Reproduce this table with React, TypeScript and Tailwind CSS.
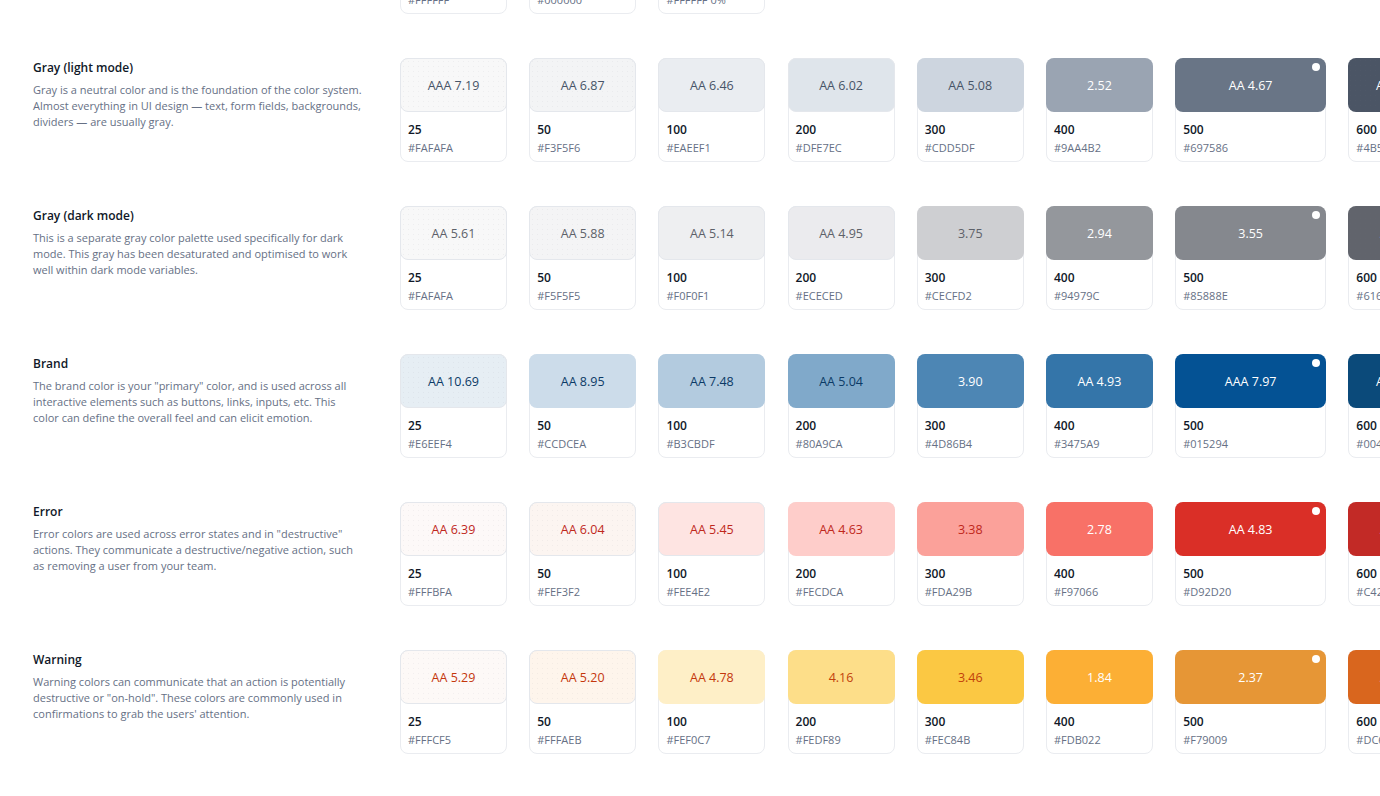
import React from "react";

type Sw = {
  name: string;
  hex: string;
  label: string;
  bg: string;
  text: string;
  dots?: boolean;
  border?: boolean;
};

type Row = {
  title: string;
  desc: string;
  swatches: Sw[];
};

const grayLightText = "text-[#475467]";
const grayDarkText = "text-[#5D6169]";
const brandText = "text-[#0B3A66]";
const errorText = "text-[#C0281C]";
const warnText = "text-[#C4370C]";
const white = "text-white";

const rows: Row[] = [
  {
    title: "Gray (light mode)",
    desc:
      "Gray is a neutral color and is the foundation of the color system. Almost everything in UI design — text, form fields, backgrounds, dividers — are usually gray.",
    swatches: [
      { name: "25", hex: "#FAFAFA", label: "AAA 7.19", bg: "bg-[#F8F8F8]", text: grayLightText, dots: true, border: true },
      { name: "50", hex: "#F3F5F6", label: "AA 6.87", bg: "bg-[#F3F4F5]", text: grayLightText, dots: true, border: true },
      { name: "100", hex: "#EAEEF1", label: "AA 6.46", bg: "bg-[#EAEDF1]", text: grayLightText, border: true },
      { name: "200", hex: "#DFE7EC", label: "AA 6.02", bg: "bg-[#DFE5EB]", text: grayLightText, border: true },
      { name: "300", hex: "#CDD5DF", label: "AA 5.08", bg: "bg-[#CDD5DF]", text: grayLightText },
      { name: "400", hex: "#9AA4B2", label: "2.52", bg: "bg-[#9AA4B2]", text: white },
      { name: "500", hex: "#697586", label: "AA 4.67", bg: "bg-[#697586]", text: white },
      { name: "600", hex: "#4B5565", label: "AAA 7.56", bg: "bg-[#4B5565]", text: white, dots: true },
    ],
  },
  {
    title: "Gray (dark mode)",
    desc:
      "This is a separate gray color palette used specifically for dark mode. This gray has been desaturated and optimised to work well within dark mode variables.",
    swatches: [
      { name: "25", hex: "#FAFAFA", label: "AA 5.61", bg: "bg-[#F8F8F8]", text: grayDarkText, dots: true, border: true },
      { name: "50", hex: "#F5F5F5", label: "AA 5.88", bg: "bg-[#F4F4F5]", text: grayDarkText, dots: true, border: true },
      { name: "100", hex: "#F0F0F1", label: "AA 5.14", bg: "bg-[#EEEFF1]", text: grayDarkText, border: true },
      { name: "200", hex: "#ECECED", label: "AA 4.95", bg: "bg-[#EBEBEE]", text: grayDarkText, border: true },
      { name: "300", hex: "#CECFD2", label: "3.75", bg: "bg-[#CECFD2]", text: grayDarkText },
      { name: "400", hex: "#94979C", label: "2.94", bg: "bg-[#94979C]", text: white },
      { name: "500", hex: "#85888E", label: "3.55", bg: "bg-[#85888E]", text: white },
      { name: "600", hex: "#61646C", label: "AA 5.98", bg: "bg-[#61646C]", text: white, dots: true },
    ],
  },
  {
    title: "Brand",
    desc:
      "The brand color is your \"primary\" color, and is used across all interactive elements such as buttons, links, inputs, etc. This color can define the overall feel and can elicit emotion.",
    swatches: [
      { name: "25", hex: "#E6EEF4", label: "AA 10.69", bg: "bg-[#E6EEF4]", text: brandText, dots: true, border: true },
      { name: "50", hex: "#CCDCEA", label: "AA 8.95", bg: "bg-[#CCDCEA]", text: brandText },
      { name: "100", hex: "#B3CBDF", label: "AA 7.48", bg: "bg-[#B3CBDF]", text: brandText },
      { name: "200", hex: "#80A9CA", label: "AA 5.04", bg: "bg-[#80A9CA]", text: brandText },
      { name: "300", hex: "#4D86B4", label: "3.90", bg: "bg-[#4D86B4]", text: white },
      { name: "400", hex: "#3475A9", label: "AA 4.93", bg: "bg-[#3475A9]", text: white },
      { name: "500", hex: "#015294", label: "AAA 7.97", bg: "bg-[#045294]", text: white },
      { name: "600", hex: "#004A85", label: "AAA 9.12", bg: "bg-[#0B4A7A]", text: white },
    ],
  },
  {
    title: "Error",
    desc:
      "Error colors are used across error states and in \"destructive\" actions. They communicate a destructive/negative action, such as removing a user from your team.",
    swatches: [
      { name: "25", hex: "#FFFBFA", label: "AA 6.39", bg: "bg-[#FDF9F8]", text: errorText, dots: true, border: true },
      { name: "50", hex: "#FEF3F2", label: "AA 6.04", bg: "bg-[#FCF5F1]", text: errorText, dots: true, border: true },
      { name: "100", hex: "#FEE4E2", label: "AA 5.45", bg: "bg-[#FEE4E2]", text: errorText, border: true },
      { name: "200", hex: "#FECDCA", label: "AA 4.63", bg: "bg-[#FECDCA]", text: errorText },
      { name: "300", hex: "#FDA29B", label: "3.38", bg: "bg-[#FBA19A]", text: errorText },
      { name: "400", hex: "#F97066", label: "2.78", bg: "bg-[#F87167]", text: white },
      { name: "500", hex: "#D92D20", label: "AA 4.83", bg: "bg-[#DA2F27]", text: white },
      { name: "600", hex: "#C42A20", label: "AA 5.91", bg: "bg-[#C22A26]", text: white },
    ],
  },
  {
    title: "Warning",
    desc:
      "Warning colors can communicate that an action is potentially destructive or \"on-hold\". These colors are commonly used in confirmations to grab the users' attention.",
    swatches: [
      { name: "25", hex: "#FFFCF5", label: "AA 5.29", bg: "bg-[#FDF9F7]", text: warnText, dots: true, border: true },
      { name: "50", hex: "#FFFAEB", label: "AA 5.20", bg: "bg-[#FEF5EC]", text: warnText, dots: true, border: true },
      { name: "100", hex: "#FEF0C7", label: "AA 4.78", bg: "bg-[#FEEFC7]", text: warnText },
      { name: "200", hex: "#FEDF89", label: "4.16", bg: "bg-[#FDDE89]", text: "text-[#C2410C]" },
      { name: "300", hex: "#FEC84B", label: "3.46", bg: "bg-[#FBC843]", text: "text-[#C2410C]" },
      { name: "400", hex: "#FDB022", label: "1.84", bg: "bg-[#FCAF35]", text: white },
      { name: "500", hex: "#F79009", label: "2.37", bg: "bg-[#E69636]", text: white },
      { name: "600", hex: "#DC6803", label: "AA 4.12", bg: "bg-[#D9661E]", text: white },
    ],
  },
];

const topRow = [
  { name: "White", hex: "#FFFFFF", bg: "bg-white" },
  { name: "Black", hex: "#000000", bg: "bg-black" },
  { name: "Transparent", hex: "#FFFFFF 0%", bg: "bg-white" },
];

function Card({ sw }: { sw: Sw }) {
  const wide = sw.name === "500";
  return (
    <div
      className={
        "relative flex h-[104px] shrink-0 flex-col rounded-[8px] border border-[#EAECF0] bg-white " +
        (wide ? "w-[151px]" : "w-[107px]")
      }
    >
      <div
        className={
          "relative mx-[-1px] mt-[-1px] flex h-[54px] items-center justify-center rounded-[8px] pt-[2px] " +
          sw.bg +
          (sw.border ? " border border-[#E4E7EC]" : "") +
          (sw.dots
            ? " bg-[radial-gradient(rgba(120,120,130,0.07)_0.8px,transparent_0.9px)] bg-[length:5px_5px]"
            : "")
        }
      >
        <span className={"text-[12.5px] leading-[16px] " + sw.text}>{sw.label}</span>
        {wide && (
          <span className="absolute right-[6px] top-[5px] h-[8px] w-[8px] rounded-full bg-white" />
        )}
      </div>
      <div className="flex flex-col px-[7px] pt-[10px]">
        <span className="text-[12px] font-semibold leading-[16px] text-[#101828]">{sw.name}</span>
        <span className="mt-[2px] text-[11px] leading-[16px] text-[#667085]">{sw.hex}</span>
      </div>
    </div>
  );
}

export default function App() {
  return (
    <div
      className="h-[796px] w-[1380px] overflow-hidden bg-white"
      style={{ fontFamily: '"Open Sans", "Noto Sans", sans-serif' }}
    >
      <div className="mt-[-90px] flex flex-col gap-[44px]">
        <div className="flex">
          <div className="w-[400px] shrink-0" />
          <div className="flex gap-[22.2px]">
            {topRow.map((c) => (
              <div
                key={c.hex}
                className="flex h-[104px] w-[107px] shrink-0 flex-col rounded-[8px] border border-[#EAECF0] bg-white"
              >
                <div className={"mx-[-1px] mt-[-1px] h-[54px] rounded-[8px] border border-[#E4E7EC] " + c.bg} />
                <div className="flex flex-col px-[7px] pt-[10px]">
                  <span className="text-[12px] font-semibold leading-[16px] text-[#101828]">{c.name}</span>
                  <span className="mt-[2px] text-[11px] leading-[16px] text-[#667085]">{c.hex}</span>
                </div>
              </div>
            ))}
          </div>
        </div>
        {rows.map((r) => (
          <div key={r.title} className="flex">
            <div className="w-[400px] shrink-0 pl-[33px]">
              <div className="w-[330px]">
                <h3 className="text-[12px] font-semibold leading-[19px] text-[#101828]">{r.title}</h3>
                <p className="mt-[5px] text-[11px] leading-[16px] text-[#667085]">{r.desc}</p>
              </div>
            </div>
            <div className="flex gap-[22.2px]">
              {r.swatches.map((s) => (
                <Card key={s.name} sw={s} />
              ))}
            </div>
          </div>
        ))}
      </div>
    </div>
  );
}
